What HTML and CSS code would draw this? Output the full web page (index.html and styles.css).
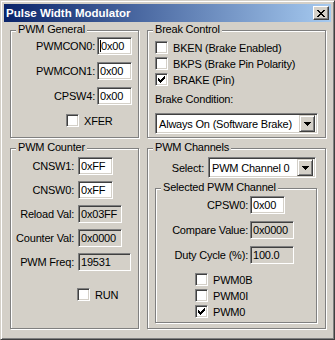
FILE: index.html
```html
<!DOCTYPE html>
<html>
<head>
<meta charset="utf-8">
<title>Pulse Width Modulator</title>
<link rel="stylesheet" href="styles.css">
</head>
<body>
<div class="win">
  <div class="title">
    <span class="caption">Pulse Width Modulator</span>
    <span class="btn close"><svg width="8" height="7" viewBox="0 0 8 7" shape-rendering="crispEdges"><path d="M0 0h2v1h-2z M6 0h2v1h-2z M1 1h2v1h-2z M5 1h2v1h-2z M2 2h4v1h-4z M3 3h2v1h-2z M2 4h4v1h-4z M1 5h2v1h-2z M5 5h2v1h-2z M0 6h2v1h-2z M6 6h2v1h-2z"/></svg></span>
  </div>
  <div class="client">

    <div class="group gen">
      <span class="legend">PWM General</span>
      <div class="fields">
        <span class="lbl">PWMCON0:</span><span class="edit w35"><i class="caret"></i>0x00</span>
        <span class="lbl">PWMCON1:</span><span class="edit w35">0x00</span>
        <span class="lbl">CPSW4:</span><span class="edit w35">0x00</span>
      </div>
      <div class="check xfer"><span class="box"></span>XFER</div>
    </div>

    <div class="group brk">
      <span class="legend">Break Control</span>
      <div class="checks">
        <div class="check"><span class="box"></span>BKEN (Brake Enabled)</div>
        <div class="check"><span class="box"></span>BKPS (Brake Pin Polarity)</div>
        <div class="check"><span class="box"><svg width="7" height="7" viewBox="0 0 7 7" shape-rendering="crispEdges"><path d="M0 2h1v3h-1z M1 3h1v3h-1z M2 4h1v3h-1z M3 3h1v3h-1z M4 2h1v3h-1z M5 1h1v3h-1z M6 0h1v3h-1z"/></svg></span>BRAKE (Pin)</div>
      </div>
      <div class="cond">Brake Condition:</div>
      <div class="combo long">
        <span class="val">Always On (Software Brake)</span>
        <span class="btn drop"><svg width="7" height="4" viewBox="0 0 7 4" shape-rendering="crispEdges"><path d="M0 0h7v1h-7z M1 1h5v1h-5z M2 2h3v1h-3z M3 3h1v1h-1z"/></svg></span>
      </div>
    </div>

    <div class="group cnt">
      <span class="legend">PWM Counter</span>
      <div class="fields">
        <span class="lbl">CNSW1:</span><span class="edit w35">0xFF</span>
        <span class="lbl">CNSW0:</span><span class="edit w35">0xFF</span>
        <span class="lbl">Reload Val:</span><span class="edit ro w44">0x03FF</span>
        <span class="lbl">Counter Val:</span><span class="edit ro w44">0x0000</span>
        <span class="lbl">PWM Freq:</span><span class="edit ro w53">19531</span>
      </div>
      <div class="check run"><span class="box"></span>RUN</div>
    </div>

    <div class="group chn">
      <span class="legend">PWM Channels</span>
      <div class="sel">
        <span class="lbl">Select:</span>
        <div class="combo short">
          <span class="val">PWM Channel 0</span>
          <span class="btn drop"><svg width="7" height="4" viewBox="0 0 7 4" shape-rendering="crispEdges"><path d="M0 0h7v1h-7z M1 1h5v1h-5z M2 2h3v1h-3z M3 3h1v1h-1z"/></svg></span>
        </div>
      </div>
      <div class="group inner">
        <span class="legend">Selected PWM Channel</span>
        <div class="fields">
          <span class="lbl">CPSW0:</span><span class="edit w35">0x00</span>
          <span class="lbl">Compare Value:</span><span class="edit ro w44">0x0000</span>
          <span class="lbl">Duty Cycle (%):</span><span class="edit ro w44">100.0</span>
        </div>
        <div class="checks">
          <div class="check"><span class="box"></span>PWM0B</div>
          <div class="check"><span class="box"></span>PWM0I</div>
          <div class="check"><span class="box"><svg width="7" height="7" viewBox="0 0 7 7" shape-rendering="crispEdges"><path d="M0 2h1v3h-1z M1 3h1v3h-1z M2 4h1v3h-1z M3 3h1v3h-1z M4 2h1v3h-1z M5 1h1v3h-1z M6 0h1v3h-1z"/></svg></span>PWM0</div>
        </div>
      </div>
    </div>

  </div>
</div>
</body>
</html>
```

FILE: styles.css
```css
body {
  margin: 0;
  background: #d4d0c8;
  font-family: "Liberation Sans", Arial, sans-serif;
  font-size: 11px;
  letter-spacing: -0.2px;
  color: #000;
}

/* window frame */
.win {
  width: 335px;
  height: 340px;
  box-sizing: border-box;
  border: 1px solid;
  border-color: #d4d0c8 #404040 #404040 #d4d0c8;
  box-shadow: inset 1px 1px #fff, inset -1px -1px #808080;
  padding: 3px;
  background: #d4d0c8;
}
.title {
  height: 18px;
  display: flex;
  align-items: center;
  justify-content: space-between;
  padding: 0 2px 0 2px;
  background: linear-gradient(to right, #0a246a, #a6caf0);
}
.caption {
  color: #fff;
  font-weight: bold;
  font-size: 11.5px;
  letter-spacing: 0;
}
.btn {
  box-sizing: border-box;
  background: #d4d0c8;
  border: 1px solid;
  border-color: #fff #404040 #404040 #fff;
  box-shadow: inset -1px -1px #808080;
  display: flex;
  align-items: center;
  justify-content: center;
}
.close {
  width: 16px;
  height: 14px;
}

.client {
  display: grid;
  grid-template-columns: 129px 179px;
  grid-template-rows: 108px 181px;
  column-gap: 8px;
  row-gap: 10px;
  padding: 8px 0 0 6px;
}

/* etched group box */
.group {
  position: relative;
  border: 1px solid #808080;
  box-shadow: inset 1px 1px #fff, 1px 1px #fff;
}
.legend {
  position: absolute;
  top: -8px;
  left: 5px;
  padding: 0 2px;
  line-height: 13px;
  background: #d4d0c8;
}

.fields {
  display: grid;
  align-items: center;
}
.lbl {
  text-align: right;
  line-height: 18px;
  white-space: nowrap;
}

/* sunken edit */
.edit {
  display: block;
  height: 18px;
  box-sizing: border-box;
  border: 1px solid;
  border-color: #808080 #fff #fff #808080;
  box-shadow: inset 1px 1px #404040, inset -1px -1px #d4d0c8;
  background: #fff;
  padding-left: 2px;
  line-height: 16px;
  white-space: nowrap;
}
.edit.ro {
  background: #d4d0c8;
}
.w35 { width: 35px; }
.w44 { width: 44px; }
.w53 { width: 53px; }
.caret {
  display: inline-block;
  width: 1px;
  height: 12px;
  background: #000;
  vertical-align: -2px;
}

/* checkboxes */
.check {
  display: flex;
  align-items: center;
  gap: 5px;
  height: 13px;
  white-space: nowrap;
}
.box {
  width: 13px;
  height: 13px;
  box-sizing: border-box;
  border: 1px solid;
  border-color: #808080 #fff #fff #808080;
  box-shadow: inset 1px 1px #404040, inset -1px -1px #d4d0c8;
  background: #fff;
  display: flex;
  align-items: center;
  justify-content: center;
  flex: none;
}
.checks {
  display: flex;
  flex-direction: column;
  gap: 3px;
}

/* combo box */
.combo {
  display: flex;
  align-items: center;
  justify-content: space-between;
  height: 21px;
  box-sizing: border-box;
  border: 1px solid;
  border-color: #808080 #fff #fff #808080;
  box-shadow: inset 1px 1px #404040, inset -1px -1px #d4d0c8;
  background: #fff;
  padding: 2px 2px 2px 3px;
}
.combo .val {
  white-space: nowrap;
}
.drop {
  width: 16px;
  height: 17px;
  border-color: #d4d0c8 #404040 #404040 #d4d0c8;
  box-shadow: inset 1px 1px #fff, inset -1px -1px #808080;
}

/* PWM General */
.gen .fields {
  grid-template-columns: 84px 35px;
  column-gap: 2px;
  row-gap: 7px;
  padding-top: 6px;
}
.xfer {
  margin-top: 9px;
  padding-left: 55px;
}

/* Break Control */
.brk {
  padding: 10px 7px 0 7px;
}
.cond {
  margin-top: 7px;
  line-height: 13px;
}
.combo.long {
  margin-top: 7px;
  width: 163px;
}

/* PWM Counter */
.cnt .fields {
  grid-template-columns: 63px auto;
  column-gap: 4px;
  row-gap: 6px;
  padding-top: 8px;
  justify-items: start;
}
.cnt .lbl {
  justify-self: stretch;
}
.run {
  margin-top: 17px;
  padding-left: 66px;
}

/* PWM Channels */
.chn {
  padding-top: 8px;
}
.sel {
  display: flex;
  align-items: center;
  gap: 4px;
}
.sel .lbl {
  width: 56px;
}
.combo.short {
  width: 108px;
}
.inner {
  margin: 10px 0 0 7px;
  width: 162px;
  height: 135px;
  box-sizing: border-box;
}
.inner .fields {
  grid-template-columns: 92px auto;
  column-gap: 2px;
  row-gap: 7px;
  padding-top: 7px;
  justify-items: start;
}
.inner .lbl {
  justify-self: stretch;
}
.inner .checks {
  margin-top: 9px;
  padding-left: 39px;
}
```
